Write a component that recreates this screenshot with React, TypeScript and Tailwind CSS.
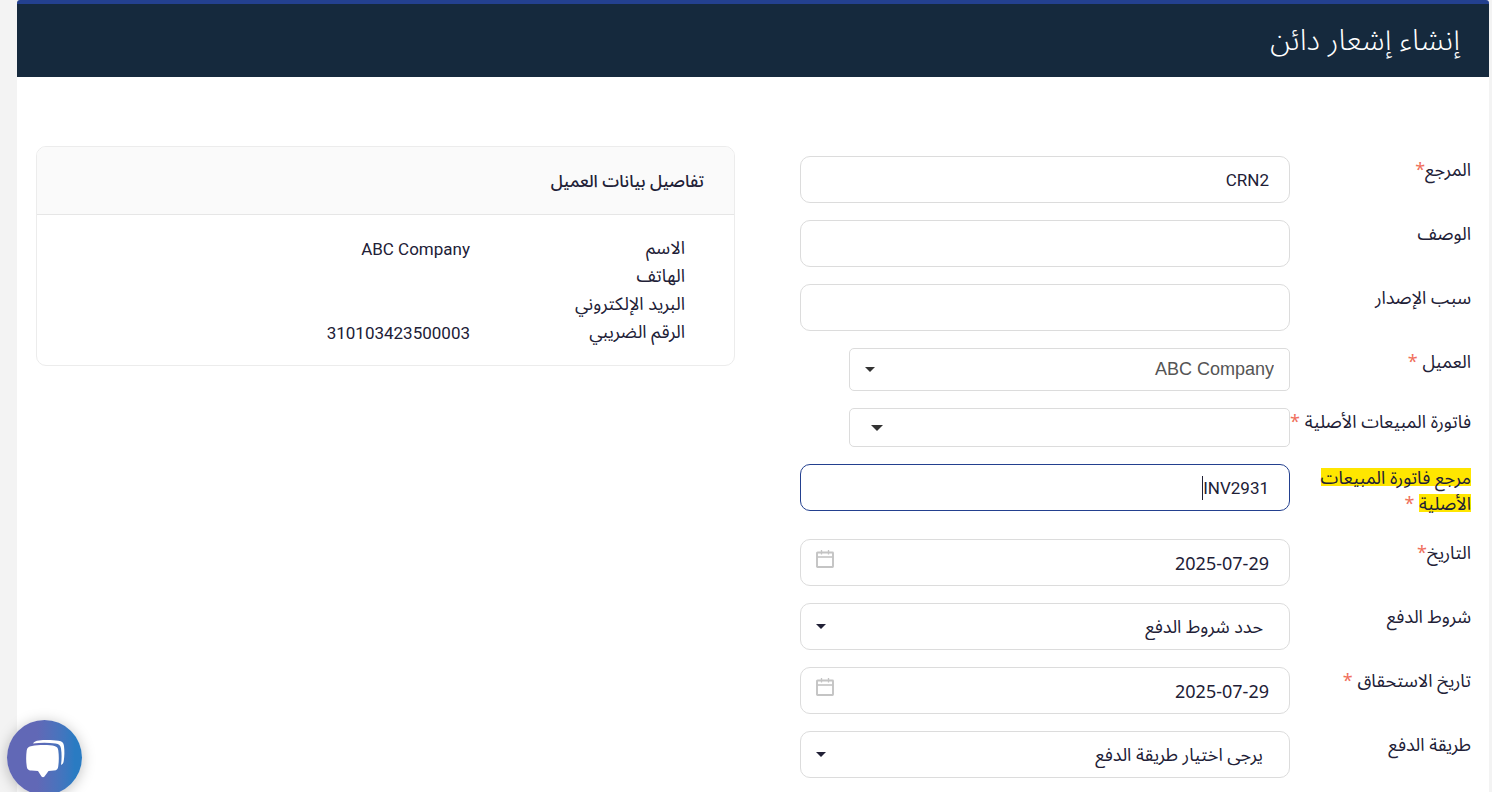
import { useState } from "react";

const labelClass = "w-[181px] shrink-0 pb-[6px] text-[18px] leading-[26px]";

const markClass =
  "bg-transparent bg-[linear-gradient(transparent_12%,#ffe600_12%,#ffe600_88%,transparent_88%)] text-inherit";

function Star() {
  return <span className="text-[#f0705c]">*</span>;
}

function Caret({ color = "text-[#212036]" }: { color?: string }) {
  return (
    <svg
      width="10"
      height="5"
      viewBox="0 0 10 5"
      className={`fill-current ${color}`}
      aria-hidden="true"
    >
      <path d="M0 0h10L5 5z" />
    </svg>
  );
}

function CalendarIcon() {
  return (
    <svg
      width="18"
      height="18"
      viewBox="0 0 18 18"
      fill="none"
      stroke="#c4c4c4"
      aria-hidden="true"
    >
      <rect x="1" y="2.5" width="16" height="14.5" rx="0.5" strokeWidth="1.9" />
      <path d="M1 7h16" strokeWidth="1.6" />
      <path d="M5.5 0v4.5M12.5 0v4.5" strokeWidth="1.3" />
    </svg>
  );
}

function TextRow({ id, label, star, value = "" }: any) {
  const [text, setText] = useState<string>(value);

  return (
    <div className="flex items-start">
      <label htmlFor={id} className={labelClass}>
        {label}
        {star && <Star />}
      </label>
      <input
        id={id}
        type="text"
        value={text}
        onChange={(e) => setText(e.target.value)}
        className="h-[47px] min-w-0 flex-1 rounded-[10px] border border-[#dcdcdc] bg-white px-5 font-['Roboto','Noto_Sans_Arabic',sans-serif] text-[17px] outline-none focus:border-[#23408f]"
      />
    </div>
  );
}

function DateRow({ id, label, star }: any) {
  const [date, setDate] = useState<string>("2025-07-29");

  return (
    <div className="flex items-start">
      <label htmlFor={id} className={labelClass}>
        {label}
        {star && <Star />}
      </label>
      <div className="flex h-[47px] min-w-0 flex-1 items-start rounded-[10px] border border-[#dcdcdc] bg-white pr-5 pl-[15px]">
        <input
          id={id}
          type="text"
          dir="ltr"
          value={date}
          onChange={(e) => setDate(e.target.value)}
          className="h-full min-w-0 flex-1 text-right text-[18px] outline-none"
        />
        <span className="pt-[10px]">
          <CalendarIcon />
        </span>
      </div>
    </div>
  );
}

function SelectRow({ id, label, placeholder }: any) {
  return (
    <div className="flex items-start">
      <label htmlFor={id} className={labelClass}>
        {label}
      </label>
      <div className="grid min-w-0 flex-1 items-center">
        <select
          id={id}
          className="col-start-1 row-start-1 h-[47px] w-full appearance-none rounded-[10px] border border-[#dcdcdc] bg-white pr-[26px] pl-10 text-[18px] outline-none"
        >
          <option>{placeholder}</option>
        </select>
        <span className="pointer-events-none col-start-1 row-start-1 ml-4 justify-self-end">
          <Caret />
        </span>
      </div>
    </div>
  );
}

function CustomerCard() {
  const details = [
    { name: "الاسم", value: "ABC Company" },
    { name: "الهاتف", value: "" },
    { name: "البريد الإلكتروني", value: "" },
    { name: "الرقم الضريبي", value: "310103423500003" },
  ];

  return (
    <section className="overflow-hidden rounded-[10px] border border-[#ececec]">
      <h2 className="border-b border-[#e6e6e6] bg-[#fafafa] px-[30px] py-5 text-[17px] leading-[27px] font-medium">
        تفاصيل بيانات العميل
      </h2>
      <dl className="px-[49px] pt-[18px] pb-5 leading-[28px]">
        {details.map((item) => (
          <div key={item.name} className="flex h-7">
            <dt className="w-[215px] shrink-0 text-[18px]">{item.name}</dt>
            <dd className="pt-[2px] font-['Roboto',sans-serif] text-[17px]">
              {item.value}
            </dd>
          </div>
        ))}
      </dl>
    </section>
  );
}

function App() {
  const [reference, setReference] = useState<string>("INV2931");

  return (
    <div
      dir="rtl"
      className="min-h-screen bg-[#f3f3f3] pr-[3px] pl-[17px] font-['Noto_Sans','Noto_Sans_Arabic','DejaVu_Sans',sans-serif] text-[#212036]"
    >
      <main className="min-h-screen rounded-t-[3px] border-t-4 border-[#23408f] bg-white">
        <header className="flex h-[73px] items-center bg-[#15293d] px-[29px] pb-1">
          <h1 className="text-[30px] leading-[44px] font-light text-white">
            إنشاء إشعار دائن
          </h1>
        </header>

        <div className="grid grid-cols-[671fr_699fr] items-start gap-[65px] pt-[69px] pr-[18px] pl-[19px]">
          <form className="flex flex-col gap-[17px] pt-[10px]">
            <TextRow id="number" label="المرجع" star value="CRN2" />
            <TextRow id="description" label="الوصف" />
            <TextRow id="reason" label="سبب الإصدار" />

            <div className="flex items-start">
              <label htmlFor="customer" className={labelClass}>
                العميل <Star />
              </label>
              <div className="ml-[49px] grid min-w-0 flex-1 items-center">
                <select
                  id="customer"
                  className="col-start-1 row-start-1 h-[43px] w-full appearance-none rounded-[5px] border border-[#dcdcdc] bg-white pr-[15px] pl-10 font-['Liberation_Sans',sans-serif] text-[18px] text-[#555555] outline-none"
                >
                  <option>ABC Company</option>
                </select>
                <span className="pointer-events-none col-start-1 row-start-1 ml-4 justify-self-end">
                  <Caret color="text-[#333333]" />
                </span>
              </div>
            </div>

            <div className="flex items-start">
              <label htmlFor="invoice" className={`${labelClass} whitespace-nowrap`}>
                فاتورة المبيعات الأصلية <Star />
              </label>
              <div className="ml-[49px] grid min-w-0 flex-1 items-center">
                <select
                  id="invoice"
                  className="col-start-1 row-start-1 h-[39px] w-full appearance-none rounded-[5px] border border-[#dcdcdc] bg-white px-10 text-[18px] outline-none"
                >
                  <option></option>
                </select>
                <span className="pointer-events-none col-start-1 row-start-1 ml-[22px] justify-self-end">
                  <svg width="12" height="6" viewBox="0 0 12 6" fill="#333333" aria-hidden="true">
                    <path d="M0 0h12L6 6z" />
                  </svg>
                </span>
              </div>
            </div>

            <div className="flex items-start">
              <label htmlFor="invoice-reference" className={labelClass}>
                <mark className={markClass}>مرجع فاتورة المبيعات</mark>{" "}
                <mark className={markClass}>الأصلية</mark> <Star />
              </label>
              <div className="flex h-[47px] min-w-0 flex-1 items-center rounded-[10px] border border-[#23408f] bg-white px-5">
                <input
                  id="invoice-reference"
                  type="text"
                  dir="ltr"
                  value={reference}
                  onChange={(e) => setReference(e.target.value)}
                  className="field-sizing-content h-full font-['Roboto',sans-serif] text-[17px] caret-transparent outline-none"
                />
                <span className="h-6 w-px bg-[#212036]" />
              </div>
            </div>

            <DateRow id="date" label="التاريخ" star />
            <SelectRow id="terms" label="شروط الدفع" placeholder="حدد شروط الدفع" />
            <DateRow id="due-date" label="تاريخ الاستحقاق " star />
            <SelectRow
              id="method"
              label="طريقة الدفع"
              placeholder="يرجى اختيار طريقة الدفع"
            />
          </form>

          <CustomerCard />
        </div>
      </main>

      <button
        type="button"
        aria-label="الدردشة"
        className="fixed -bottom-[3px] left-[7px] flex size-[75px] items-center justify-center rounded-full bg-linear-to-r from-[#6168b6] from-40% to-[#2a7bc2] to-90% shadow-[0_2px_14px_rgba(0,0,0,0.25)]"
      >
        <svg width="40" height="40" viewBox="0 0 40 40" fill="#ffffff" aria-hidden="true">
          <path d="M7 8C13 6.800 25 6.800 29.500 8C32 8.700 33 10 33.300 12.500C34 18 34 23 33.300 28C33 31 32 32.400 29 32.600L23.500 33L19.500 38.500Q18 40 16.500 38.500L13 33L6.500 32.600C3 32.400 2 31 1.700 28C1 23 1 18 1.700 12.500C2 10 3.500 8.600 7 8z" />
          <path d="M8 5.500C9 3.500 11 2.800 14 2.400C20 1.700 28 1.900 33.500 2.700C37 3.200 38.600 4.600 39 8C39.600 13 39.500 18 38.800 22.500C38.500 25 37.700 26.300 36 27C36.800 21.500 36.800 15.500 36 10.500C35.500 7.300 34 6 30.500 5.500C23 4.600 15 4.700 8 5.500z" />
        </svg>
      </button>
    </div>
  );
}

export default App;
